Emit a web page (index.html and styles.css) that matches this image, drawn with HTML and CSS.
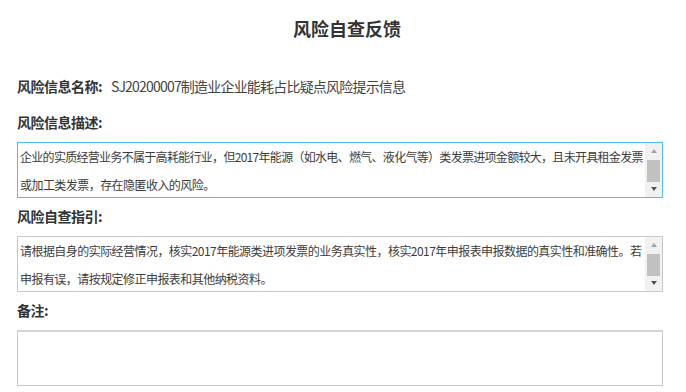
FILE: index.html
```html
<!DOCTYPE html>
<html lang="zh-CN">
<head>
<meta charset="utf-8">
<title>风险自查反馈</title>
<link rel="stylesheet" href="styles.css">
</head>
<body>
<div class="page">
  <h1 class="title">风险自查反馈</h1>

  <div class="name-row">
    <span class="label">风险信息名称:</span>
    <span class="value">SJ20200007制造业企业能耗占比疑点风险提示信息</span>
  </div>

  <div class="section">
    <div class="label">风险信息描述:</div>
    <div class="box box-focus">
      <div class="box-text"><span class="line tight">企业的实质经营业务不属于高耗能行业，但2017年能源（如水电、燃气、液化气等）类发票进项金额较大，且未开具租金发票</span><span class="line">或加工类发票，存在隐匿收入的风险。</span></div>
      <div class="sbar">
        <span class="arrow arrow-up"></span>
        <span class="thumb"></span>
        <span class="arrow arrow-down"></span>
      </div>
    </div>
  </div>

  <div class="section">
    <div class="label">风险自查指引:</div>
    <div class="box">
      <div class="box-text"><span class="line">请根据自身的实际经营情况，核实2017年能源类进项发票的业务真实性，核实2017年申报表申报数据的真实性和准确性。若</span><span class="line">申报有误，请按规定修正申报表和其他纳税资料。</span></div>
      <div class="sbar">
        <span class="arrow arrow-up"></span>
        <span class="thumb"></span>
        <span class="arrow arrow-down"></span>
      </div>
    </div>
  </div>

  <div class="section">
    <div class="label">备注:</div>
    <textarea class="box note"></textarea>
  </div>
</div>
</body>
</html>
```

FILE: styles.css
```css
* { box-sizing: border-box; }

html, body {
  margin: 0;
  padding: 0;
  background: #ffffff;
}

body {
  font-family: "Noto Sans CJK SC", "Noto Sans", sans-serif;
  color: #333333;
}

.page {
  padding: 16px 23px 0 17px;
  display: flex;
  flex-direction: column;
}

.title {
  margin: 0;
  font-size: 18px;
  line-height: 24px;
  font-weight: bold;
  text-align: center;
  color: #333333;
  padding-left: 14px;
}

.name-row {
  margin-top: 36px;
  display: flex;
  align-items: center;
  height: 20px;
  gap: 9px;
}

.label {
  font-size: 14px;
  line-height: 20px;
  font-weight: bold;
  color: #333333;
  white-space: nowrap;
  letter-spacing: -0.5px;
}

.value {
  font-size: 14px;
  line-height: 20px;
  color: #444444;
  white-space: nowrap;
  letter-spacing: -0.8px;
}

.section {
  display: flex;
  flex-direction: column;
  gap: 10px;
  margin-top: 16px;
}

.section + .section {
  margin-top: 8px;
}

.box {
  width: 646px;
  height: 56px;
  border: 1px solid #c9c9c9;
  background: #ffffff;
  display: flex;
  overflow: hidden;
}

.box-focus {
  border-color: #4fbfef;
}

.box-text {
  flex: 1;
  min-width: 0;
  padding: 0 0 0 2px;
  font-size: 12px;
  line-height: 28px;
  letter-spacing: -0.55px;
  color: #3c3c3c;
  white-space: nowrap;
  overflow: hidden;
  display: flex;
  flex-direction: column;
}

.line {
  display: block;
}

.line.tight {
  letter-spacing: -0.7px;
}

.sbar {
  width: 17px;
  flex: none;
  background: #f1f1f1;
  display: flex;
  flex-direction: column;
  align-items: center;
  padding: 0 2px;
}

.arrow {
  width: 0;
  height: 0;
  border-left: 3.5px solid transparent;
  border-right: 3.5px solid transparent;
  margin: 6px 0;
}

.arrow-up {
  border-bottom: 4px solid #a3a3a3;
}

.arrow-down {
  border-top: 4px solid #505050;
  margin-top: auto;
}

.thumb {
  width: 13px;
  height: 22px;
  background: #c1c1c1;
  margin-top: 1px;
}

.note {
  display: block;
  resize: none;
  outline: none;
  margin: 0;
  padding: 4px;
  border-width: 2px 1px 1px 1px;
  border-style: solid;
  border-color: #d6d6d6 #c9c9c9 #c9c9c9 #c9c9c9;
  font-family: inherit;
}
```
